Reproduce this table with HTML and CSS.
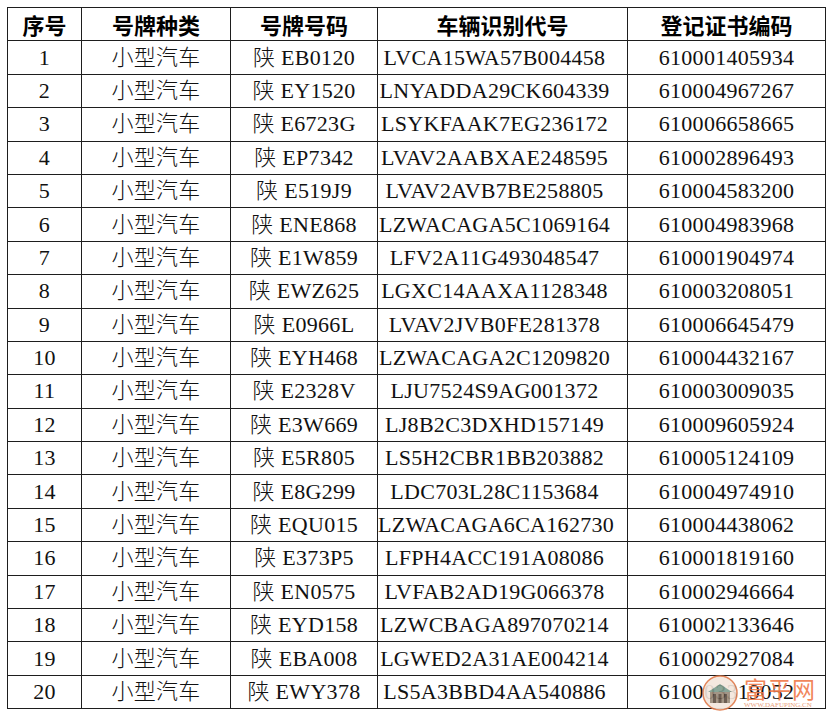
FILE: index.html
```html
<!DOCTYPE html>
<html lang="zh">
<head>
<meta charset="utf-8">
<title>登记车辆列表</title>
<link rel="stylesheet" href="styles.css">
</head>
<body>
<div class="page">
<table class="reg">
<colgroup><col class="c1"><col class="c2"><col class="c3"><col class="c4"><col class="c5"></colgroup>
<thead>
<tr><th>序号</th><th>号牌种类</th><th>号牌号码</th><th>车辆识别代号</th><th>登记证书编码</th></tr>
</thead>
<tbody>
<tr><td>1</td><td>小型汽车</td><td>陕 EB0120</td><td class="vin">LVCA15WA57B004458</td><td>610001405934</td></tr>
<tr><td>2</td><td>小型汽车</td><td>陕 EY1520</td><td class="vin">LNYADDA29CK604339</td><td>610004967267</td></tr>
<tr><td>3</td><td>小型汽车</td><td>陕 E6723G</td><td class="vin">LSYKFAAK7EG236172</td><td>610006658665</td></tr>
<tr><td>4</td><td>小型汽车</td><td>陕 EP7342</td><td class="vin">LVAV2AABXAE248595</td><td>610002896493</td></tr>
<tr><td>5</td><td>小型汽车</td><td>陕 E519J9</td><td class="vin">LVAV2AVB7BE258805</td><td>610004583200</td></tr>
<tr><td>6</td><td>小型汽车</td><td>陕 ENE868</td><td class="vin">LZWACAGA5C1069164</td><td>610004983968</td></tr>
<tr><td>7</td><td>小型汽车</td><td>陕 E1W859</td><td class="vin">LFV2A11G493048547</td><td>610001904974</td></tr>
<tr><td>8</td><td>小型汽车</td><td>陕 EWZ625</td><td class="vin">LGXC14AAXA1128348</td><td>610003208051</td></tr>
<tr><td>9</td><td>小型汽车</td><td>陕 E0966L</td><td class="vin">LVAV2JVB0FE281378</td><td>610006645479</td></tr>
<tr><td>10</td><td>小型汽车</td><td>陕 EYH468</td><td class="vin">LZWACAGA2C1209820</td><td>610004432167</td></tr>
<tr><td>11</td><td>小型汽车</td><td>陕 E2328V</td><td class="vin">LJU7524S9AG001372</td><td>610003009035</td></tr>
<tr><td>12</td><td>小型汽车</td><td>陕 E3W669</td><td class="vin">LJ8B2C3DXHD157149</td><td>610009605924</td></tr>
<tr><td>13</td><td>小型汽车</td><td>陕 E5R805</td><td class="vin">LS5H2CBR1BB203882</td><td>610005124109</td></tr>
<tr><td>14</td><td>小型汽车</td><td>陕 E8G299</td><td class="vin">LDC703L28C1153684</td><td>610004974910</td></tr>
<tr><td>15</td><td>小型汽车</td><td>陕 EQU015</td><td class="vin">LZWACAGA6CA162730</td><td>610004438062</td></tr>
<tr><td>16</td><td>小型汽车</td><td>陕 E373P5</td><td class="vin">LFPH4ACC191A08086</td><td>610001819160</td></tr>
<tr><td>17</td><td>小型汽车</td><td>陕 EN0575</td><td class="vin">LVFAB2AD19G066378</td><td>610002946664</td></tr>
<tr><td>18</td><td>小型汽车</td><td>陕 EYD158</td><td class="vin">LZWCBAGA897070214</td><td>610002133646</td></tr>
<tr><td>19</td><td>小型汽车</td><td>陕 EBA008</td><td class="vin">LGWED2A31AE004214</td><td>610002927084</td></tr>
<tr><td>20</td><td>小型汽车</td><td>陕 EWY378</td><td class="vin">LS5A3BBD4AA540886</td><td>610003319052</td></tr>
</tbody>
</table>
<div class="logo">
<svg class="logo-icon" width="36" height="36" viewBox="0 0 36 36" aria-hidden="true">
<circle cx="18" cy="18" r="17" fill="#f3e6dc" stroke="#e07a4a" stroke-width="1.5"/>
<rect x="8" y="16" width="20" height="12" fill="#9a8a78"/>
<path d="M6 17 L18 9 L30 17 Z" fill="#7d9c8c"/>
<rect x="11" y="19" width="3" height="9" fill="#5d4d40"/>
<rect x="16.5" y="19" width="3" height="9" fill="#5d4d40"/>
<rect x="22" y="19" width="3" height="9" fill="#5d4d40"/>
</svg>
<div class="logo-text">
<span class="logo-name">富平网</span>
<span class="logo-url">WWW.DAFUPING.CN</span>
</div>
</div>
</div>
</body>
</html>
```
FILE: styles.css
```css
html, body {
  margin: 0;
  padding: 0;
  background: #ffffff;
}
.page {
  position: relative;
  width: 832px;
  height: 718px;
  padding: 7px 0 0 7px;
  box-sizing: border-box;
}
.reg {
  border-collapse: collapse;
  table-layout: fixed;
  width: 818px;
  font-family: "Liberation Serif", "Noto Sans CJK SC", serif;
  font-size: 22px;
  color: #111;
}
.c1 { width: 74px; }
.c2 { width: 149px; }
.c3 { width: 147px; }
.c4 { width: 250px; }
.c5 { width: 198px; }
.reg th,
.reg td {
  border: 1px solid #1e1e1e;
  height: 33.4px;
  padding: 0;
  text-align: center;
  vertical-align: middle;
  line-height: 1;
  white-space: nowrap;
  box-sizing: border-box;
}
.reg th {
  font-family: "Noto Sans CJK SC", sans-serif;
  font-weight: 700;
  font-size: 22px;
  color: #000;
}
.reg td {
  font-weight: 300;
  letter-spacing: 0.3px;
}
.reg td.vin {
  padding-right: 16px;
}
.logo {
  position: absolute;
  left: 702px;
  top: 675px;
  display: flex;
  align-items: center;
  gap: 6px;
  opacity: 0.9;
}
.logo-icon {
  display: block;
}
.logo-text {
  display: flex;
  flex-direction: column;
  line-height: 1;
}
.logo-name {
  font-family: "Noto Sans CJK SC", sans-serif;
  font-size: 23px;
  color: #f07a4a;
  letter-spacing: 1px;
}
.logo-url {
  font-family: "Liberation Serif", serif;
  font-size: 7px;
  color: #e8956d;
  margin-top: 2px;
}
```
